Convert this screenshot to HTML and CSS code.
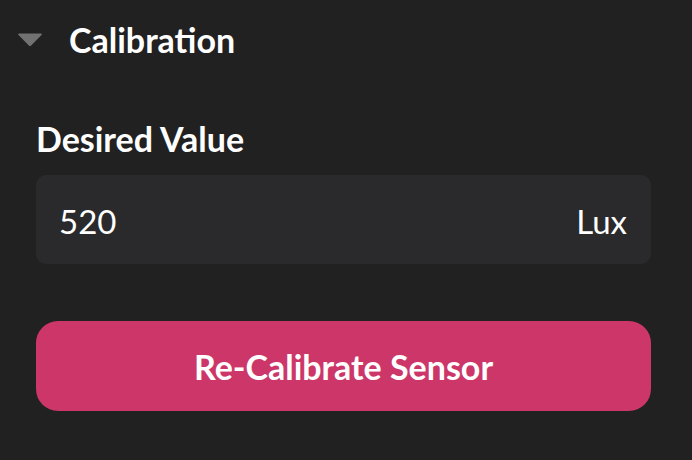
FILE: index.html
```html
<!DOCTYPE html>
<html lang="en">
<head>
    <meta charset="UTF-8">
    <meta name="viewport" content="width=device-width, initial-scale=1.0">
    <title>Calibration</title>
    <link rel="stylesheet" href="styles.css">
</head>
<body>

    <div class="panel">
        <!-- Section header -->
        <div class="section-header">
            <svg class="caret" width="26" height="15" viewBox="0 0 26 15">
                <path d="M2 1.5 L24 1.5 Q25.5 1.5 24.5 3 L14.2 13.5 Q13 14.6 11.8 13.5 L1.5 3 Q0.5 1.5 2 1.5 Z" fill="#727272"/>
            </svg>
            <span class="section-title">Calibration</span>
        </div>

        <!-- Desired value field -->
        <div class="field">
            <label class="field-label" for="desired">Desired Value</label>
            <div class="input-box">
                <span id="desired" class="input-value">520</span>
                <span class="input-unit">Lux</span>
            </div>
        </div>

        <button class="primary-btn">Re-Calibrate Sensor</button>
    </div>

</body>
</html>
```

FILE: styles.css
```css
body {
    margin: 0;
    background-color: #212121;
    font-family: Lato, "Open Sans", sans-serif;
    color: #ffffff;
}

.panel {
    padding: 20px 41px 0 36px;
}

.section-header {
    display: flex;
    align-items: center;
    margin-left: -19px;
    height: 40px;
}

.caret {
    margin-right: 26px;
    margin-top: -2px;
}

.section-title {
    font-size: 34px;
    font-weight: 700;
    line-height: 40px;
}

.field {
    display: flex;
    flex-direction: column;
    margin-top: 59px;
}

.field-label {
    font-size: 34px;
    font-weight: 700;
    line-height: 40px;
}

.input-box {
    display: flex;
    justify-content: space-between;
    align-items: center;
    height: 89px;
    margin-top: 16px;
    padding: 2px 24px 0 23px;
    box-sizing: border-box;
    background-color: #2a2a2c;
    border-radius: 10px;
    font-size: 33px;
    line-height: 40px;
}

.primary-btn {
    display: block;
    width: 100%;
    height: 90px;
    margin-top: 57px;
    border: none;
    border-radius: 22px;
    background-color: #cc3668;
    color: #ffffff;
    font-family: Lato, "Open Sans", sans-serif;
    font-size: 34px;
    font-weight: 700;
    cursor: pointer;
}
```
